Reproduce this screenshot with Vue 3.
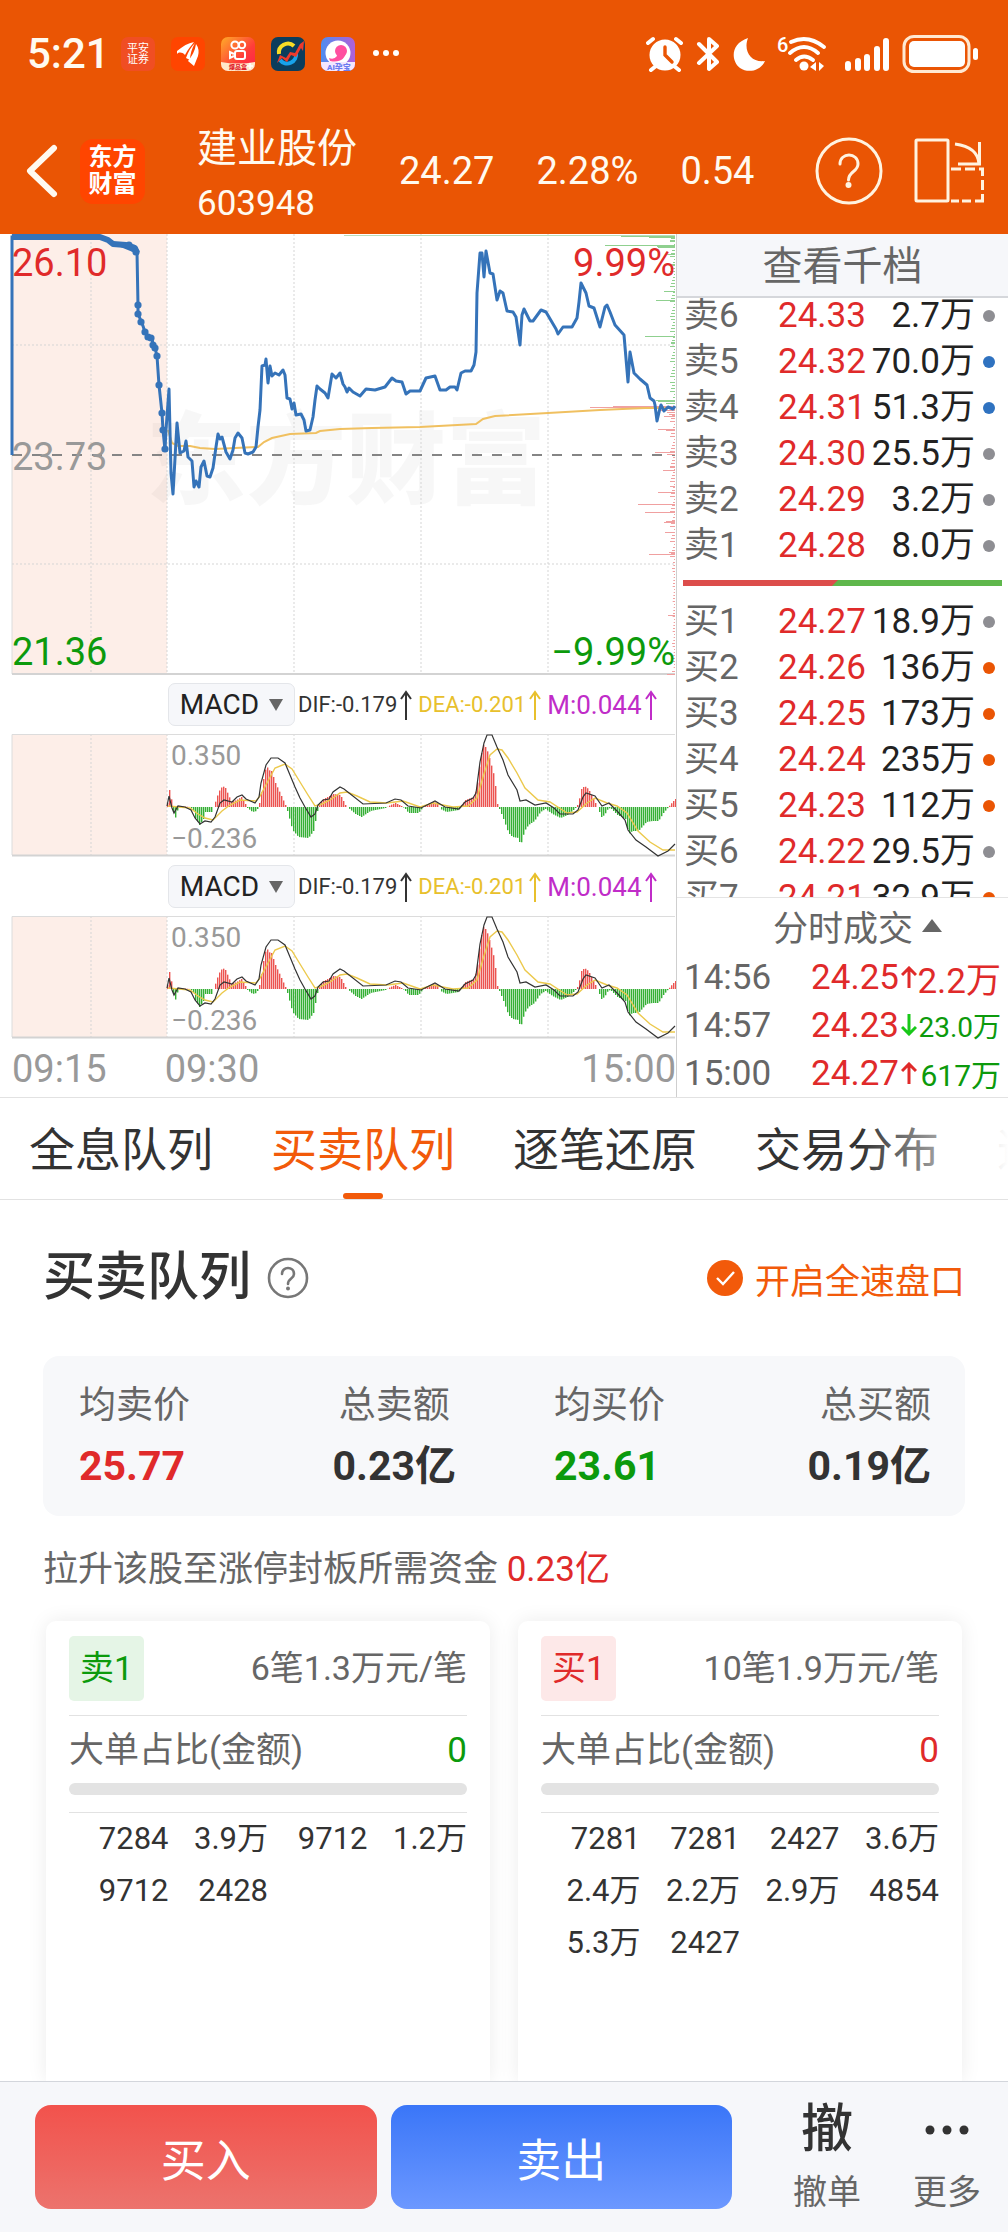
<template>
  <div class="page">
    <header class="header">
      <div class="status">
        <span class="status__time">5:21</span>
        <div class="status__apps">
          <span class="app-icon app-icon--pa">平安<br />证券</span>
          <svg class="app-icon" viewBox="0 0 34 34">
            <rect width="34" height="34" rx="7" fill="#ff4500" />
            <path d="M6 14C12 9 17 6 23 5C20 9 17 12 14 18C11 15 8 15 6 17Z" fill="#fff" />
            <path d="M24 6C20 10 17 15 15 21L19 23C19 17 21 11 24 6Z" fill="#fff" />
            <path d="M25 7C28 11 28 15 27 19L23 29L17 24C21 19 24 14 25 7Z" fill="#fff" />
          </svg>
          <svg class="app-icon" viewBox="0 0 34 34">
            <defs>
              <linearGradient id="ks" x1="0" y1="0" x2="1" y2="1">
                <stop offset="0" stop-color="#ffac28" />
                <stop offset="0.6" stop-color="#ff3d3a" />
                <stop offset="1" stop-color="#ff1f4b" />
              </linearGradient>
            </defs>
            <rect width="34" height="34" rx="7" fill="url(#ks)" />
            <g fill="none" stroke="#fff" stroke-width="2">
              <circle cx="14" cy="8" r="3.6" />
              <circle cx="21" cy="8" r="3.2" />
              <rect x="14" y="14" width="10" height="8" rx="2" />
              <path d="M13 17L9 15V21L13 19" />
            </g>
            <path d="M0 25Q17 28 34 25V27a7 7 0 0 1-7 7H7a7 7 0 0 1-7-7Z" fill="#ffe9c9" />
            <text x="8" y="32" font-size="6" font-weight="900" fill="#e0232e">爆品盒</text>
            <path d="M29 26v6M26 29h6" stroke="#fff" stroke-width="1.6" />
          </svg>
          <svg class="app-icon" viewBox="0 0 34 34">
            <rect width="34" height="34" rx="7" fill="#0b3d5c" />
            <path d="M8 17A9 9 0 0 1 23 9" fill="none" stroke="#f7dc25" stroke-width="4" />
            <path d="M25 16A9 9 0 0 1 9 23" fill="none" stroke="#18a2ea" stroke-width="4" />
            <path d="M6 26L9 18L15 21L19 15L24 16L29 7L33 4L32 14L30 11L25 20L20 18L16 25L11 21Z" fill="#ee3a2c" />
          </svg>
          <svg class="app-icon" viewBox="0 0 34 34">
            <defs>
              <linearGradient id="moonbg" x1="0" y1="0" x2="1" y2="0">
                <stop offset="0" stop-color="#4f8df0" />
                <stop offset="1" stop-color="#b060d8" />
              </linearGradient>
            </defs>
            <rect width="34" height="34" rx="7" fill="url(#moonbg)" />
            <circle cx="17" cy="16" r="12.5" fill="#fff" />
            <circle cx="20" cy="14" r="6" fill="#ff4fa0" />
            <path d="M25 15C24 22 19 26 9 24L8 21Q13 23 16 19Z" fill="#ff4fa0" />
            <path d="M0 25H34V27a7 7 0 0 1-7 7H7a7 7 0 0 1-7-7Z" fill="#f3e6ff" />
            <text x="6" y="33" font-size="8" font-weight="900" fill="#6b7cf0">AI孕宝</text>
          </svg>
          <svg class="status__dots" viewBox="0 0 28 34">
            <circle cx="5" cy="16" r="3" />
            <circle cx="15" cy="16" r="3" />
            <circle cx="25" cy="16" r="3" />
          </svg>
        </div>
        <div class="status__sys">
          <svg width="38" height="38" viewBox="645 34 38 38" fill="#fff" stroke="#fff" stroke-linecap="round">
            <circle cx="664" cy="54" r="15.5" stroke="none" />
            <path d="M647 42L652 38M680 42L675 38M655 65L650 69M673 65L678 69" stroke-width="4" />
            <path d="M664 46V54L671 61" stroke="#ea5504" stroke-width="3.4" fill="none" />
          </svg>
          <svg class="sys-bt" width="24" height="38" viewBox="694 34 24 38" fill="none" stroke="#fff" stroke-width="4" stroke-linejoin="round" stroke-linecap="round">
            <path d="M698 43L716 61L708 68V38L716 45L698 62" />
          </svg>
          <svg class="sys-moon" width="34" height="38" viewBox="731 34 34 38" fill="#fff">
            <path d="M747 37C742 50 750 62 764 60C760 69 748 73 739 67C730 60 729 43 747 37Z" />
          </svg>
          <svg class="sys-wifi" width="50" height="38" viewBox="776 34 50 38" fill="none" stroke="#fff" stroke-width="3.8" stroke-linecap="round">
            <text x="776" y="51" font-size="20" font-weight="500" fill="#fff" stroke="none">6</text>
            <path d="M790 41Q807 33 823 46M789 52Q803 40 817 52M795 59Q803 52 812 59" />
            <circle cx="803" cy="65" r="4.5" fill="#fff" stroke="none" />
            <path d="M815 61V70L809 66ZM818 61V70L823 65Z" fill="#fff" stroke="none" />
          </svg>
          <svg class="sys-signal" width="44" height="38" viewBox="844 34 44 38" stroke="#fff" stroke-width="6" stroke-linecap="round">
            <path d="M847 63V67M857 60V67M866 56V67M876 48V67M885 40V67" />
          </svg>
          <svg width="76" height="40" viewBox="901 33 76 40" fill="none">
            <rect x="903" y="35.500" width="65" height="35" rx="10" stroke="#ffe9d2" stroke-width="3" />
            <rect x="908" y="40" width="56" height="26" rx="5" fill="#fff" />
            <rect x="972" y="47" width="5" height="12" rx="2.500" fill="#fff" />
          </svg>
        </div>
      </div>

      <nav class="nav">
        <button class="icon-btn" aria-label="返回">
          <svg width="32" height="54" viewBox="0 0 32 54" fill="none" stroke="#fffaf0" stroke-width="6" stroke-linecap="round" stroke-linejoin="round">
            <path d="M28 4L4 27L28 50" />
          </svg>
        </button>
        <span class="nav__logo">东方<br />财富</span>
        <h1 class="nav__stock">
          <span class="nav__name">建业股份</span>
          <span class="nav__code">603948</span>
        </h1>
        <div class="nav__quote">
          <span>24.27</span>
          <span>2.28%</span>
          <span>0.54</span>
        </div>
        <button class="icon-btn nav__help" aria-label="帮助">
          <svg width="68" height="68" viewBox="0 0 68 68" fill="none" stroke="#fff3e0" stroke-width="3">
            <circle cx="34" cy="34" r="32" />
            <path d="M25 27C25 15 43 15 43 27C43 35 33.500 34 33.500 43" stroke-linecap="round" />
            <circle cx="33.500" cy="48" r="3" fill="#fff3e0" stroke="none" />
          </svg>
        </button>
        <button class="icon-btn" aria-label="横屏">
          <svg width="70" height="66" viewBox="0 0 70 66" fill="none" stroke="#fff3e0" stroke-width="3">
            <rect x="2" y="2" width="32" height="61" rx="1" />
            <path d="M41 6Q64 9 65 26M65.500 4V26H44" />
            <path d="M37 31H47M51 31H61M65 31H68.500V38M68.500 42V52M68.500 56V63H61M57 63H48M45 63H37" />
          </svg>
        </button>
      </nav>
    </header>

    <section class="quote">
      <div class="charts">
        <svg class="chart" viewBox="0 0 676 441">
          <rect x="12" y="0" width="155" height="440" fill="#fdeee8" />
          <text x="146" y="262" class="watermark">东方财富</text>
          <g class="grid-line">
            <path d="M91 0V440M167 0V440M294 0V440M421 0V440M548 0V440" />
            <path d="M12 111H675M12 330H675" />
          </g>
          <path d="M12 0V440" stroke="#dcdcdc" stroke-width="1" />
          <path d="M12 440H675" stroke="#d3d3d3" stroke-width="2" />
          <path d="M12 221H675" stroke="#858585" stroke-width="2" stroke-dasharray="10 10" />
          <rect
            v-for="(b, i) in volumeBars"
            :key="i"
            :x="675 - b.len"
            :y="b.y"
            :width="b.len"
            height="1"
            :fill="b.y < 172 ? '#8fd08f' : '#f0a0a0'"
          />
          <path d="M344 1.500H675" stroke="#b9dcb9" />
          <polyline :points="avgLine" fill="none" stroke="#f0c060" stroke-width="2" />
          <polyline :points="openLine" fill="none" stroke="#3573b9" stroke-width="3" />
          <path d="M12 3H100L108 6L113 10L126 11L135 14L137 19" fill="none" stroke="#3573b9" stroke-width="6" stroke-linejoin="round" />
          <circle v-for="(d, i) in openDots" :key="'d' + i" :cx="d[0]" :cy="d[1]" r="3.6" fill="#3573b9" />
          <polyline :points="priceLine" fill="none" stroke="#3573b9" stroke-width="3" stroke-linejoin="round" />
          <text x="12" y="42" class="axis-text up">26.10</text>
          <text x="12" y="236" class="axis-text flat">23.73</text>
          <text x="12" y="431" class="axis-text down">21.36</text>
          <text x="675" y="42" class="axis-text up" text-anchor="end">9.99%</text>
          <text x="675" y="431" class="axis-text down" text-anchor="end">−9.99%</text>
        </svg>

        <template v-for="n in 2" :key="n">
          <div class="macd-bar">
            <button class="macd-bar__select">
              MACD
              <svg width="14" height="12" viewBox="0 0 14 12"><path d="M0 0H14L7 12Z" fill="#666" /></svg>
            </button>
            <span class="macd-bar__item">
              DIF:-0.179
              <svg class="arrow" viewBox="0 0 12 30"><path d="M6 30V2M1 9L6 2L11 9" /></svg>
            </span>
            <span class="macd-bar__item macd-bar__item--dea">
              DEA:-0.201
              <svg class="arrow" viewBox="0 0 12 30"><path d="M6 30V2M1 9L6 2L11 9" /></svg>
            </span>
            <span class="macd-bar__item macd-bar__item--m">
              M:0.044
              <svg class="arrow" viewBox="0 0 12 30"><path d="M6 30V2M1 9L6 2L11 9" /></svg>
            </span>
          </div>
          <svg class="chart" viewBox="0 0 676 123">
            <rect x="12" y="0" width="155" height="121" fill="#fdeee8" />
            <path d="M91 0V121M167 0V121M294 0V121M421 0V121M548 0V121" class="grid-line" />
            <path d="M12 121V0.500H675" fill="none" stroke="#dcdcdc" />
            <path d="M12 121.500H675" stroke="#d3d3d3" stroke-width="2" />
            <rect
              v-for="b in macdBars"
              :key="b.x"
              :x="b.x"
              :y="b.h > 0 ? 73 - b.h : 73"
              width="1.4"
              :height="Math.abs(b.h)"
              :fill="b.h > 0 ? '#ec5350' : '#35b035'"
            />
            <polyline :points="deaLine" fill="none" stroke="#ecc94c" stroke-width="1.4" />
            <polyline :points="difLine" fill="none" stroke="#333" stroke-width="1.2" />
            <text x="171" y="31" class="macd-text">0.350</text>
            <text x="171" y="114" class="macd-text">−0.236</text>
          </svg>
        </template>

        <div class="time-axis">
          <span>09:15</span>
          <span class="time-axis__open">09:30</span>
          <span class="time-axis__close">15:00</span>
        </div>
      </div>

      <aside class="book">
        <button class="book__head">查看千档</button>
        <div class="book__list">
          <div v-for="o in sells" :key="o.label" class="order">
            <span class="order__label">{{ o.label }}</span>
            <span class="order__price">{{ o.price }}</span>
            <span class="order__amount">{{ o.amount }}</span>
            <i class="order__dot" :class="'order__dot--' + o.dot"></i>
          </div>
          <svg class="book__ratio" viewBox="0 0 319 6" preserveAspectRatio="none">
            <rect width="319" height="6" fill="#5fb74c" />
            <path d="M0 0H155L149 6H0Z" fill="#dc4d4b" />
          </svg>
          <div v-for="o in buys" :key="o.label" class="order">
            <span class="order__label">{{ o.label }}</span>
            <span class="order__price">{{ o.price }}</span>
            <span class="order__amount">{{ o.amount }}</span>
            <i class="order__dot" :class="'order__dot--' + o.dot"></i>
          </div>
        </div>
        <button class="book__deals">
          分时成交
          <svg width="20" height="13" viewBox="0 0 20 13"><path d="M10 0L20 13H0Z" fill="#666" /></svg>
        </button>
        <div v-for="t in deals" :key="t.time" class="deal">
          <span class="deal__time">{{ t.time }}</span>
          <span class="deal__price">{{ t.price }}</span>
          <svg class="deal__arrow" :class="{ 'deal__arrow--down': t.down }" viewBox="0 0 16 22">
            <path d="M8 22V2M1 9L8 2L15 9" />
          </svg>
          <span class="deal__amount" :class="t.cls">{{ t.amount }}</span>
        </div>
      </aside>
    </section>

    <nav class="tabs">
      <button
        v-for="tab in tabs"
        :key="tab"
        class="tabs__item"
        :class="{ 'tabs__item--active': tab === activeTab }"
        @click="activeTab = tab"
      >
        {{ tab }}
      </button>
    </nav>

    <main class="main">
      <div class="title-row">
        <h2 class="title">买卖队列</h2>
        <button class="icon-btn title-row__help" aria-label="说明">
          <svg width="42" height="42" viewBox="0 0 42 42" fill="none" stroke="#777" stroke-width="2.6">
            <circle cx="21" cy="21" r="19" />
            <path d="M15 17C15 9 27 9 27 17C27 22 21 21 21 27" stroke-linecap="round" />
            <circle cx="21" cy="31.500" r="2" fill="#777" stroke="none" />
          </svg>
        </button>
        <label class="fast">
          <input v-model="fastMode" type="checkbox" class="fast__input" />
          <svg class="fast__icon" viewBox="0 0 36 36">
            <circle cx="18" cy="18" r="18" />
            <path v-if="fastMode" d="M10 18L16 24L27 12" fill="none" stroke="#fff" stroke-width="2.4" />
          </svg>
          开启全速盘口
        </label>
      </div>

      <div class="stats">
        <div v-for="(group, i) in stats" :key="i" class="stats__group">
          <div v-for="s in group" :key="s.label" class="stats__cell">
            <span class="stats__label">{{ s.label }}</span>
            <span class="stats__value" :class="s.cls">{{ s.value }}</span>
          </div>
        </div>
      </div>

      <p class="need">拉升该股至涨停封板所需资金 <span class="up">0.23亿</span></p>

      <div class="cards">
        <section v-for="c in cards" :key="c.label" class="card">
          <div class="card__head">
            <span class="card__badge" :class="'card__badge--' + c.side">{{ c.label }}</span>
            <span>{{ c.summary }}</span>
          </div>
          <div class="card__ratio">
            <span>大单占比(金额)</span>
            <span :class="c.side">0</span>
          </div>
          <div class="card__track"></div>
          <div class="card__orders">
            <span v-for="(q, i) in c.orders" :key="i">{{ q }}</span>
          </div>
        </section>
      </div>
    </main>

    <footer class="footer">
      <button class="trade trade--buy">买入</button>
      <button class="trade trade--sell">卖出</button>
      <button class="tool">
        <span class="tool__icon">撤</span>
        <span>撤单</span>
      </button>
      <button class="tool">
        <svg class="tool__icon" width="44" height="50" viewBox="0 0 44 50" fill="#333">
          <circle cx="5" cy="25" r="4.500" />
          <circle cx="22" cy="25" r="4.500" />
          <circle cx="39" cy="25" r="4.500" />
        </svg>
        <span>更多</span>
      </button>
    </footer>
  </div>
</template>

<script setup>
import { ref } from 'vue';

const tabs = ['全息队列', '买卖队列', '逐笔还原', '交易分布', '逐笔成交'];
const activeTab = ref('买卖队列');
const fastMode = ref(true);

const sells = [
  { label: '卖6', price: '24.33', amount: '2.7万', dot: 'gray' },
  { label: '卖5', price: '24.32', amount: '70.0万', dot: 'blue' },
  { label: '卖4', price: '24.31', amount: '51.3万', dot: 'blue' },
  { label: '卖3', price: '24.30', amount: '25.5万', dot: 'gray' },
  { label: '卖2', price: '24.29', amount: '3.2万', dot: 'gray' },
  { label: '卖1', price: '24.28', amount: '8.0万', dot: 'gray' }
];

const buys = [
  { label: '买1', price: '24.27', amount: '18.9万', dot: 'gray' },
  { label: '买2', price: '24.26', amount: '136万', dot: 'orange' },
  { label: '买3', price: '24.25', amount: '173万', dot: 'orange' },
  { label: '买4', price: '24.24', amount: '235万', dot: 'orange' },
  { label: '买5', price: '24.23', amount: '112万', dot: 'orange' },
  { label: '买6', price: '24.22', amount: '29.5万', dot: 'gray' },
  { label: '买7', price: '24.21', amount: '32.9万', dot: 'orange' }
];

const deals = [
  { time: '14:56', price: '24.25', amount: '2.2万', cls: 'up', down: false },
  { time: '14:57', price: '24.23', amount: '23.0万', cls: 'down deal__amount--small', down: true },
  { time: '15:00', price: '24.27', amount: '617万', cls: 'down deal__amount--medium', down: false }
];

const stats = [
  [
    { label: '均卖价', value: '25.77', cls: 'up' },
    { label: '总卖额', value: '0.23亿', cls: '' }
  ],
  [
    { label: '均买价', value: '23.61', cls: 'down' },
    { label: '总买额', value: '0.19亿', cls: '' }
  ]
];

const cards = [
  {
    label: '卖1',
    side: 'down',
    summary: '6笔1.3万元/笔',
    orders: ['7284', '3.9万', '9712', '1.2万', '9712', '2428']
  },
  {
    label: '买1',
    side: 'up',
    summary: '10笔1.9万元/笔',
    orders: ['7281', '7281', '2427', '3.6万', '2.4万', '2.2万', '2.9万', '4854', '5.3万', '2427']
  }
];

// call auction part, 09:15 - 09:30
const openLine = '12,221 12,3 100,3 137,18 138,71 138,80 142,89 145,98 148,103 152,104 153,111 155,114 157,122 159,151 162,179 163,196 165,216';
const openDots = [
  [129, 11], [133, 14], [136, 18], [138, 71], [138, 80], [141, 88], [145, 98], [148, 103], [151, 104],
  [153, 111], [155, 114], [157, 122], [159, 151], [162, 179], [163, 196], [165, 215]
];

const priceLine =
  '165,216 166,196 169,155 171,239 173,260 177,189 180,219 184,217 186,207 188,223 192,227 194,253 196,247 199,253 201,233 204,227 ' +
  '207,242 210,243 213,234 216,213 218,200 220,205 222,203 226,218 230,225 233,216 235,204 238,199 242,204 245,219 248,220 253,218 ' +
  '256,213 258,193 260,176 262,132 265,131 266,125 268,149 270,132 272,142 275,139 279,141 283,136 285,141 287,164 290,165 292,175 ' +
  '294,169 296,181 301,180 304,186 306,197 310,196 313,183 315,166 317,152 320,155 325,159 328,164 332,140 336,144 340,139 343,150 ' +
  '345,153 347,158 349,154 353,158 360,162 366,155 375,156 385,153 392,144 396,147 402,148 406,160 410,157 420,157 426,144 435,142 ' +
  '440,156 446,156 450,153 455,153 457,156 461,139 465,137 471,137 474,131 476,118 477,59 480,19 482,19 484,43 486,17 490,39 493,40 ' +
  '497,66 500,57 503,59 507,77 513,78 516,83 520,111 522,81 524,75 530,87 533,87 541,76 546,78 556,95 558,100 563,93 572,93 577,84 ' +
  '579,68 581,49 586,59 589,72 594,74 600,93 605,73 607,71 610,78 615,91 624,101 628,148 630,118 634,139 640,145 647,151 650,164 ' +
  '654,167 655,171 657,187 660,174 661,171 664,177 668,173 673,175 675,172';

const avgLine =
  '168,196 172,209 178,212 190,212 200,214 215,215 235,214 258,213 264,208 272,204 290,200 316,199 320,197 340,195 372,194 ' +
  '420,193 476,190 483,185 495,182 548,179 600,176 645,174 675,174';

const difLine =
  '167,72 169,62 172,74 174,79 178,72 185,73 191,76 195,84 200,90 205,87 211,88 215,83 220,69 224,66 232,68 237,63 242,61 246,65 ' +
  '255,69 259,63 261,49 266,31 271,24 278,24 285,29 290,41 295,53 300,64 305,73 311,83 315,80 318,71 323,66 329,65 333,58 340,53 ' +
  '344,55 363,70 386,69 395,65 401,66 408,72 421,74 435,67 445,73 459,75 465,68 473,64 476,59 480,28 484,9 487,1 492,1 497,13 ' +
  '503,26 508,41 517,56 520,67 526,66 535,71 546,69 554,74 560,80 573,80 578,76 583,63 586,59 595,62 602,72 609,69 618,78 625,86 ' +
  '628,96 636,106 646,113 658,122 668,117 675,110';

const deaLine =
  '168,72 190,74 198,80 205,84 213,86 222,77 230,71 240,66 256,67 260,62 268,47 275,34 285,30 292,35 300,48 308,61 315,72 322,70 ' +
  '330,66 340,59 347,58 357,62 370,68 387,69 403,67 420,73 433,69 453,73 468,72 477,64 483,43 490,21 497,15 502,16 508,24 517,39 ' +
  '525,54 538,66 550,68 567,79 577,78 587,69 595,64 607,69 617,72 627,79 638,97 650,108 663,116 675,116';

// histogram outline as [x, height], bars are sampled every 2px
const macdShape = [
  [167, 4], [169, 17], [172, 3], [174, -13], [176, -8], [178, 1], [190, 0], [193, -4], [195, -11], [199, -18], [203, -12],
  [205, -5], [211, -5], [213, 0], [216, 8], [218, 15], [222, 21], [225, 19], [228, 12], [231, 5], [236, 7], [241, 10],
  [244, 5], [247, -1], [252, -5], [256, -4], [258, 0], [260, 8], [263, 28], [266, 42], [268, 37], [271, 36], [275, 24],
  [281, 11], [285, 2], [287, -4], [292, -23], [298, -30], [308, -31], [313, -24], [317, -4], [319, 3], [323, 8], [333, 13],
  [340, 12], [345, 2], [348, -1], [355, -7], [361, -10], [370, -4], [385, -1], [390, 2], [395, 4], [401, 1], [405, -2],
  [408, -6], [418, -6], [423, 0], [428, 3], [433, 5], [437, 4], [440, -2], [446, -5], [458, -3], [461, 2], [465, 7],
  [473, 10], [476, 18], [478, 31], [480, 50], [483, 62], [486, 59], [489, 49], [494, 30], [497, 3], [499, -2], [503, -12],
  [508, -26], [512, -30], [518, -31], [520, -39], [524, -24], [528, -18], [534, -14], [540, -5], [545, -2], [552, -7],
  [560, -11], [567, -8], [573, -3], [576, 0], [578, 4], [581, 18], [584, 21], [588, 18], [593, 8], [597, 0], [599, -5],
  [601, -10], [604, -8], [608, -1], [611, -2], [617, -8], [625, -12], [628, -27], [632, -24], [638, -24], [646, -15],
  [652, -14], [658, -14], [663, -6], [668, 0], [672, 5], [676, 9]
];

const macdBars = [];
for (let x = 167, k = 0; x < 676; x += 2) {
  while (macdShape[k + 1][0] < x) k++;
  const [x0, h0] = macdShape[k];
  const [x1, h1] = macdShape[k + 1];
  macdBars.push({ x, h: h0 + ((h1 - h0) * (x - x0)) / (x1 - x0) });
}

// price distribution along the right edge
const volumeBars = [
  [2, 54], [3, 26], [6, 5], [11, 70], [12, 18], [13, 17], [20, 8], [30, 6], [57, 11], [66, 19], [85, 4], [102, 30], [108, 4],
  [148, 5], [166, 19], [167, 17], [169, 9], [172, 62], [173, 85], [174, 50], [176, 14], [178, 8], [180, 6], [182, 11],
  [195, 17], [196, 9], [214, 4], [218, 20], [220, 8], [233, 5], [236, 12], [252, 5], [258, 17], [262, 3], [270, 37],
  [278, 30], [287, 9], [288, 11], [298, 10], [307, 3], [318, 6], [320, 26], [334, 3], [364, 2], [381, 7], [409, 3],
  [437, 3], [440, 8]
].map(([y, len]) => ({ y, len }));
for (let y = 4; y < 436; y += 3) {
  volumeBars.push({ y, len: 1 + ((y * 7) % 5) / (y > 330 ? 3 : 1) });
}
</script>

<style>
body {
  margin: 0;
  background: #fff;
}
</style>

<style scoped>
.page {
  display: flex;
  flex-direction: column;
  min-height: 100vh;
  font-family: Roboto, "Noto Sans CJK SC", sans-serif;
  color: #333;
  background: #fff;
}

button {
  padding: 0;
  border: none;
  background: none;
  font-family: inherit;
  color: inherit;
  cursor: pointer;
}

svg {
  display: block;
  flex: none;
}

.up {
  color: #e02a2a;
}

.down {
  color: #0c9a0c;
}

.flat {
  color: #999;
}

/* header */
.header {
  background: #ea5504;
  color: #fffaf0;
}

.status {
  display: flex;
  align-items: center;
  height: 108px;
  padding: 0 30px 0 27px;
}

.status__time {
  width: 94px;
  font-size: 42px;
  font-weight: 500;
  line-height: 48px;
}

.status__apps {
  display: flex;
  gap: 16px;
}

.app-icon {
  width: 34px;
  height: 34px;
  font-family: Roboto, "Noto Sans CJK SC", sans-serif;
}

.app-icon--pa {
  box-sizing: border-box;
  padding-top: 6px;
  border-radius: 7px;
  background: #f04e23;
  color: #fff;
  font-size: 11px;
  line-height: 11px;
  text-align: center;
}

.status__dots {
  width: 28px;
  height: 34px;
  fill: #fff;
}

.status__sys {
  display: flex;
  align-items: center;
  margin-left: auto;
}

.sys-bt {
  margin-left: 11px;
}

.sys-moon {
  margin-left: 13px;
}

.sys-wifi {
  margin-left: 11px;
}

.sys-signal {
  margin: 0 13px 0 18px;
}

.nav {
  display: flex;
  align-items: center;
  height: 126px;
  padding: 0 24px 0 26px;
}

.nav__logo {
  box-sizing: border-box;
  width: 65px;
  height: 65px;
  margin-left: 22px;
  padding-top: 5px;
  border-radius: 13px;
  background: #ff4500;
  color: #fff;
  font-size: 24px;
  font-weight: 700;
  line-height: 27px;
  text-align: center;
}

.nav__stock {
  display: flex;
  flex-direction: column;
  margin: 0 42px 0 52px;
  padding-top: 6px;
  font-weight: 400;
}

.nav__name {
  font-size: 40px;
  line-height: 60px;
}

.nav__code {
  font-size: 35px;
  line-height: 50px;
}

.nav__quote {
  display: flex;
  gap: 42px;
  font-size: 38px;
  line-height: 50px;
}

.nav__help {
  margin: 0 31px 0 auto;
}

/* charts */
.quote {
  display: grid;
  grid-template-columns: minmax(0, 1fr) 331px;
  border-bottom: 1px solid #e2e2e2;
}

.charts {
  border-right: 1px solid #cfcfcf;
}

.chart {
  width: 100%;
  height: auto;
  font-family: Roboto, "Noto Sans CJK SC", sans-serif;
}

.grid-line {
  fill: none;
  stroke: #d5d5d5;
  stroke-dasharray: 2 2;
}

.watermark {
  font-size: 100px;
  font-weight: 900;
  fill: rgba(0, 0, 0, 0.03);
}

.axis-text {
  font-size: 38px;
  fill: currentColor;
}

.macd-text {
  font-size: 28px;
  fill: #999;
}

.macd-bar {
  display: flex;
  align-items: center;
  height: 59px;
  padding-left: 168px;
  white-space: nowrap;
}

.macd-bar__select {
  display: flex;
  align-items: center;
  justify-content: center;
  gap: 10px;
  box-sizing: border-box;
  width: 127px;
  height: 43px;
  margin-right: 3px;
  border: 1px solid #e4e6ea;
  border-radius: 7px;
  background: #f6f7fa;
  font-size: 28px;
  color: #222;
}

.macd-bar__item {
  display: flex;
  align-items: center;
  gap: 3px;
  margin-right: 6px;
  font-size: 22px;
  color: #333;
}

.macd-bar__item--dea {
  color: #e8c02c;
}

.macd-bar__item--m {
  color: #c02cc8;
  font-size: 26px;
}

.arrow {
  width: 12px;
  height: 30px;
  fill: none;
  stroke: currentColor;
  stroke-width: 2;
}

.time-axis {
  display: flex;
  height: 58px;
  padding-left: 12px;
  font-size: 38px;
  line-height: 61px;
  color: #999;
}

.time-axis__open {
  margin-left: 58px;
}

.time-axis__close {
  margin-left: auto;
}

/* order book */
.book {
  display: flex;
  flex-direction: column;
  font-size: 35px;
}

.book__head {
  box-sizing: border-box;
  height: 64px;
  border-bottom: 2px solid #d5d7db;
  background: #f6f7fa;
  font-size: 40px;
  line-height: 66px;
  color: #666;
}

.book__list {
  display: flex;
  flex-direction: column;
  justify-content: flex-start;
  height: 599px;
  overflow: hidden;
}

.book__list::before {
  content: "";
  margin-top: -5px;
}

.order {
  display: flex;
  align-items: center;
  flex: none;
  height: 46px;
  padding: 0 13px 0 7px;
  line-height: 46px;
}

.order__label {
  width: 94px;
  color: #666;
}

.order__price {
  color: #e02a2a;
}

.order__amount {
  margin-left: auto;
  color: #222;
}

.order__dot {
  width: 12px;
  height: 12px;
  margin-left: 8px;
  border-radius: 50%;
  background: #8e8e93;
}

.order__dot--blue {
  background: #2f72c0;
}

.order__dot--orange {
  background: #ea5504;
}

.book__ratio {
  width: auto;
  height: 6px;
  margin: 11px 6px 13px;
}

.book__deals {
  display: flex;
  align-items: center;
  justify-content: center;
  gap: 9px;
  height: 56px;
  padding-left: 30px;
  border-top: 1px solid #e4e4e4;
  font-size: 35px;
  color: #666;
}

.deal {
  display: flex;
  align-items: center;
  height: 48px;
  padding: 0 7px;
  white-space: nowrap;
}

.deal__time {
  flex: 1;
  color: #666;
}

.deal__price {
  color: #e02a2a;
}

.deal__arrow {
  width: 16px;
  height: 22px;
  margin-left: 2px;
  fill: none;
  stroke: #e02a2a;
  stroke-width: 3;
}

.deal__arrow--down {
  stroke: #18c818;
  transform: rotate(180deg);
}

.deal__amount {
  width: 84px;
  text-align: right;
}

.deal__amount--small {
  font-size: 28px;
}

.deal__amount--medium {
  font-size: 30px;
}

/* tabs */
.tabs {
  position: relative;
  display: flex;
  gap: 58px;
  height: 101px;
  padding-left: 29px;
  border-bottom: 1px solid #e2e2e2;
  overflow: hidden;
}

.tabs::after {
  content: "";
  position: absolute;
  top: 0;
  right: 0;
  width: 148px;
  height: 100%;
  background: linear-gradient(to right, rgba(255, 255, 255, 0), #fff);
  pointer-events: none;
}

.tabs__item {
  display: flex;
  flex-direction: column;
  flex: none;
  align-items: center;
  justify-content: space-between;
  font-size: 46px;
  line-height: 105px;
  white-space: nowrap;
}

.tabs__item--active {
  position: relative;
  color: #f25a0a;
}

.tabs__item--active::after {
  content: "";
  position: absolute;
  bottom: 0;
  width: 40px;
  height: 6px;
  border-radius: 3px;
  background: #f25a0a;
}

/* queue */
.main {
  display: flex;
  flex: 1;
  flex-direction: column;
  padding: 0 43px;
  overflow: hidden;
}

.title-row {
  display: flex;
  align-items: center;
  height: 156px;
}

.title {
  margin: 0;
  font-size: 52px;
  font-weight: 500;
  line-height: 70px;
}

.title-row__help {
  margin-left: 16px;
}

.fast {
  display: flex;
  align-items: center;
  gap: 12px;
  margin-left: auto;
  font-size: 35px;
  color: #f25a0a;
}

.fast__input {
  position: absolute;
  opacity: 0;
}

.fast__icon {
  width: 36px;
  height: 36px;
  fill: #f25a0a;
}

.stats {
  display: flex;
  gap: 98px;
  padding: 22px 34px 18px 36px;
  border-radius: 16px;
  background: #f7f8fa;
}

.stats__group {
  display: flex;
  flex: 1;
  justify-content: space-between;
}

.stats__cell {
  display: flex;
  flex-direction: column;
}

.stats__cell:last-child {
  text-align: center;
}

.stats__group:last-child .stats__cell:last-child {
  text-align: right;
}

.stats__label {
  font-size: 37px;
  line-height: 56px;
  color: #666;
}

.stats__value {
  font-size: 41px;
  font-weight: 700;
  line-height: 64px;
}

.need {
  margin: 29px 0 26px;
  font-size: 35px;
  line-height: 50px;
  color: #666;
}

.cards {
  display: flex;
  flex: 1;
  gap: 28px;
  padding: 0 3px;
}

.card {
  flex: 1;
  padding: 15px 23px;
  border-radius: 10px 10px 0 0;
  box-shadow: 0 0 20px rgba(0, 0, 0, 0.08);
  font-size: 34px;
  color: #666;
}

.card__head {
  display: flex;
  align-items: center;
  justify-content: space-between;
  padding-bottom: 14px;
  border-bottom: 1px solid #e2e2e2;
  line-height: 65px;
}

.card__badge {
  padding: 0 11px;
  border-radius: 5px;
}

.card__badge--down {
  background: #e5f5e6;
  color: #0c9a0c;
}

.card__badge--up {
  background: #fde8e8;
  color: #e02a2a;
}

.card__ratio {
  display: flex;
  justify-content: space-between;
  padding-top: 3px;
  font-size: 35px;
  line-height: 64px;
}

.card__track {
  height: 12px;
  border-radius: 6px;
  background: #e3e3e3;
}

.card__orders {
  display: grid;
  grid-template-columns: repeat(4, 1fr);
  margin-top: 17px;
  border-top: 1px solid #e2e2e2;
  font-size: 31px;
  line-height: 52px;
  color: #333;
  text-align: right;
}

/* bottom bar */
.footer {
  display: flex;
  align-items: flex-start;
  padding: 23px 27px 15px 35px;
  border-top: 1px solid #d3d6dc;
  background: #f6f7fa;
}

.trade {
  flex: 1;
  height: 104px;
  margin-right: 14px;
  border-radius: 16px;
  font-size: 45px;
  color: #fff;
}

.trade--buy {
  background: linear-gradient(#f2524c, #ec736d);
}

.trade--sell {
  background: linear-gradient(#3a76f8, #6c98ff);
}

.tool {
  display: flex;
  flex-direction: column;
  align-items: center;
  margin-left: 47px;
  font-size: 34px;
  line-height: 50px;
  color: #666;
}

.tool + .tool {
  margin-left: 52px;
}

.tool__icon {
  height: 50px;
  margin-bottom: 12px;
  font-size: 52px;
  font-weight: 500;
  line-height: 50px;
  color: #333;
}
</style>
